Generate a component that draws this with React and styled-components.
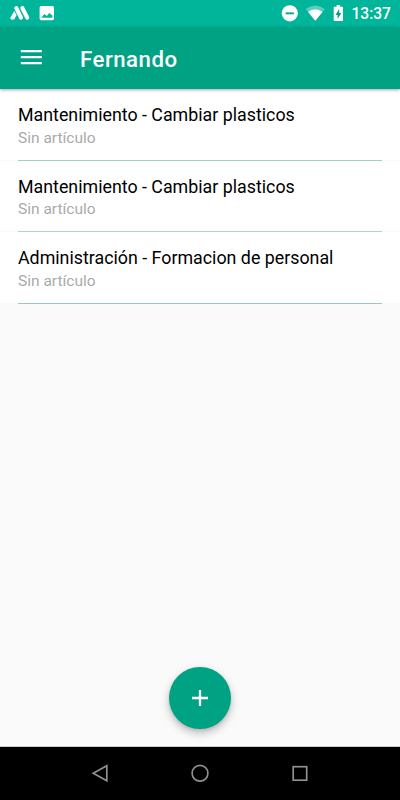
import styled, { createGlobalStyle } from "styled-components";

const GlobalStyle = createGlobalStyle`
  * {
    box-sizing: border-box;
  }
  body {
    margin: 0;
    font-family: Roboto, sans-serif;
  }
  svg {
    display: block;
  }
`;

const Screen = styled.div`
  width: 400px;
  height: 800px;
  display: flex;
  flex-direction: column;
  overflow: hidden;
  background: #fafafa;
`;

const StatusBar = styled.div`
  height: 27px;
  flex-shrink: 0;
  display: flex;
  justify-content: space-between;
  background: #00b59a;
  color: #ffffff;
`;

const Time = styled.div`
  width: 45px;
  padding-top: 1px;
  font-size: 15.6px;
  font-weight: 500;
  line-height: 27px;
  text-align: right;
  margin-right: 9px;
  white-space: nowrap;
`;

const StatusIcons = styled.div`
  display: flex;
`;

const AppBar = styled.header`
  position: relative;
  height: 62px;
  flex-shrink: 0;
  display: flex;
  align-items: center;
  padding-left: 20px;
  background: #00a284;
  box-shadow: 0 1px 3px rgba(0, 0, 0, 0.35);
  z-index: 1;
`;

const MenuButton = styled.button`
  display: flex;
  width: 22px;
  padding: 0 0 2px;
  border: none;
  background: none;
`;

const Title = styled.h1`
  margin: 2px 0 0 38px;
  font-size: 22.2px;
  font-weight: 500;
  line-height: 28px;
  letter-spacing: 0.5px;
  color: #ffffff;
`;

const List = styled.ul`
  margin: 0;
  padding: 0;
  list-style: none;
  flex: 1;
`;

const Item = styled.li`
  height: 71.5px;
  padding: 15px 18px 0;
  background: #ffffff;
  box-shadow: inset 0 -1px #fafafa;
`;

const ItemBody = styled.div`
  height: 56.5px;
  border-bottom: 1px solid ${(props) => props.$line};
`;

const ItemTitle = styled.div`
  font-size: 17.82px;
  line-height: 22px;
  color: #000000;
  white-space: nowrap;
`;

const ItemSubtitle = styled.div`
  margin-top: 1.9px;
  font-size: 15.5px;
  line-height: 20px;
  color: #aaaaaa;
`;

const Footer = styled.div`
  height: 80px;
  flex-shrink: 0;
  display: flex;
  justify-content: center;
  border-bottom: 1px solid #cccccc;
`;

const AddButton = styled.button`
  width: 62px;
  height: 62px;
  display: flex;
  align-items: center;
  justify-content: center;
  padding: 0;
  border: none;
  border-radius: 50%;
  background: #00a284;
  box-shadow: 0 4px 8px rgba(0, 0, 0, 0.25), 0 1px 3px rgba(0, 0, 0, 0.1);
`;

const NavBar = styled.nav`
  height: 53px;
  flex-shrink: 0;
  display: flex;
  justify-content: center;
  gap: 76px;
  padding-top: 14px;
  background: #000000;
`;

const tasks = [
  {
    id: 1,
    title: "Mantenimiento - Cambiar plasticos",
    subtitle: "Sin artículo",
    line: "#9fd1c3",
  },
  {
    id: 2,
    title: "Mantenimiento - Cambiar plasticos",
    subtitle: "Sin artículo",
    line: "#a9d8cc",
  },
  {
    id: 3,
    title: "Administración - Formacion de personal",
    subtitle: "Sin artículo",
    line: "#9dc9bd",
  },
];

function NotificationIcons() {
  return (
    <svg width="60" height="27" fill="#fff">
      <path d="M10.2 18 L14.2 11 L16.6 15 L14.2 19.4 H11 Z" />
      <path
        d="M16.3 8.2 L21 17.6 M22.4 8.2 L27.2 17.6"
        stroke="#fff"
        strokeWidth="4.1"
        strokeLinecap="round"
      />
      <path
        fillRule="evenodd"
        d="M41.2 6 H52.3 Q54 6 54 7.7 V18.5 Q54 20.2 52.3 20.2 H41.2 Q39.6 20.2 39.6 18.5 V7.7 Q39.6 6 41.2 6 Z M41.3 17.8 H52.4 V15.6 L49.2 12.9 L46.8 16 L44.4 14 Z"
      />
    </svg>
  );
}

function SystemIcons() {
  return (
    <svg width="76" height="27" fill="#fff">
      <circle cx="19.8" cy="13.3" r="8.1" />
      <rect x="15.6" y="12.4" width="8.3" height="1.9" fill="#00a98d" />
      <path d="M35.8 9 Q45.3 2 54.8 9 L45.3 20.8 Z" fillOpacity="0.35" />
      <path d="M38.1 11.9 Q45.3 6.8 52.5 11.9 L45.3 20.8 Z" />
      <path d="M64.6 6.8 H66.6 V5 H70.2 V6.8 H72.2 Q73 6.8 73 7.8 V20 Q73 21 72.2 21 H64.6 Q63.7 21 63.7 20 V7.8 Q63.7 6.8 64.6 6.8 Z" />
      <path d="M69.2 8.9 V12.9 H71.3 L67.6 19 V14.9 H65.5 Z" fill="#009d81" />
    </svg>
  );
}

export default function App() {
  return (
    <Screen>
      <GlobalStyle />
      <StatusBar>
        <NotificationIcons />
        <StatusIcons>
          <SystemIcons />
          <Time>13:37</Time>
        </StatusIcons>
      </StatusBar>
      <AppBar>
        <MenuButton aria-label="Menu">
          <svg width="22" height="16" fill="#fff">
            <path d="M0.8 1h21v2.3h-21z M0.8 7h21v2.3h-21z M0.8 13h21v2.3h-21z" />
          </svg>
        </MenuButton>
        <Title>Fernando</Title>
      </AppBar>
      <List>
        {tasks.map((task) => (
          <Item key={task.id}>
            <ItemBody $line={task.line}>
              <ItemTitle>{task.title}</ItemTitle>
              <ItemSubtitle>{task.subtitle}</ItemSubtitle>
            </ItemBody>
          </Item>
        ))}
      </List>
      <Footer>
        <AddButton aria-label="Add">
          <svg width="18" height="18" fill="none" stroke="#fff" strokeWidth="2.3">
            <path d="M1 9h16M9 1v16" />
          </svg>
        </AddButton>
      </Footer>
      <NavBar>
        <svg width="24" height="24" fill="none" stroke="#8f8f8f" strokeWidth="1.7">
          <path d="M5.3 12.3L18.8 4.8v15z" />
        </svg>
        <svg width="24" height="24" fill="none" stroke="#8f8f8f" strokeWidth="1.7">
          <circle cx="12" cy="12.3" r="7.9" />
        </svg>
        <svg width="24" height="24" fill="none" stroke="#8f8f8f" strokeWidth="1.7">
          <rect x="5.2" y="5.7" width="13.5" height="13.5" />
        </svg>
      </NavBar>
    </Screen>
  );
}
